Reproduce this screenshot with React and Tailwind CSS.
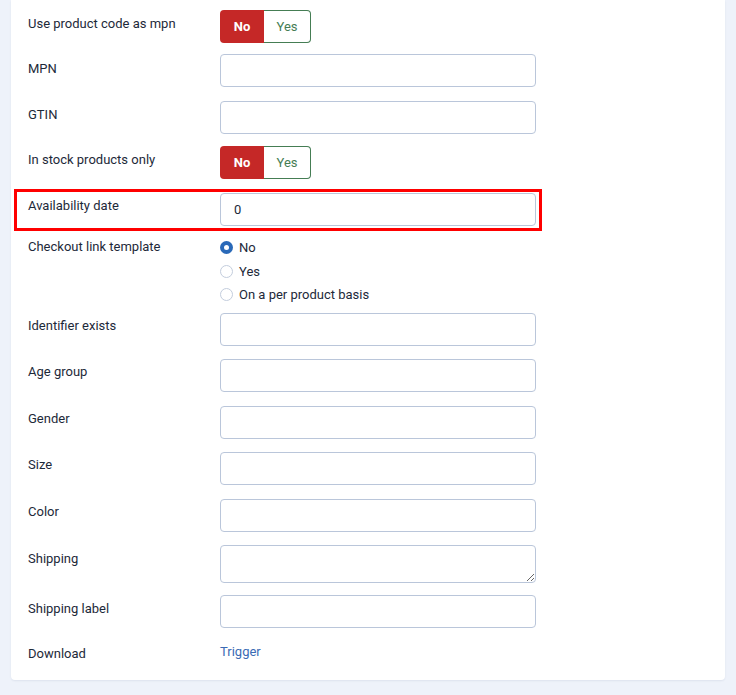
import React, { useState } from "react";

const font = { fontFamily: "Roboto, 'Liberation Sans', sans-serif" };

const Label = ({ children, className = "" }) => (
  <div className={`w-[192px] shrink-0 text-[13px] leading-[20px] text-[#1d2939] ${className}`}>
    {children}
  </div>
);

const Toggle = ({ value, onChange }) => (
  <div className="flex h-[33px] w-[91px] text-[13px]">
    <button
      onClick={() => onChange(false)}
      className={`w-[44px] rounded-l-[4px] font-bold ${
        !value ? "bg-[#c52827] text-white" : "border border-r-0 border-[#457d54] bg-white text-[#457d54]"
      }`}
    >
      No
    </button>
    <button
      onClick={() => onChange(true)}
      className={`flex-1 rounded-r-[4px] ${
        value ? "bg-[#457d54] font-bold text-white" : "border border-l-0 border-[#457d54] bg-white text-[#457d54]"
      }`}
    >
      Yes
    </button>
  </div>
);

const TextInput = ({ value, className = "" }) => (
  <input
    type="text"
    defaultValue={value}
    className={`h-[33px] w-[316px] rounded-[4px] border border-[#bac6da] bg-white px-[13px] text-[13px] text-[#1d2939] outline-none ${className}`}
  />
);

const Radio = ({ checked, label, onClick }) => (
  <label onClick={onClick} className="flex h-[23.5px] cursor-pointer items-center gap-[6px] text-[13px] text-[#1d2939]">
    {checked ? (
      <span className="flex h-[13px] w-[13px] items-center justify-center rounded-full bg-[#2a69b8]">
        <span className="h-[5px] w-[5px] rounded-full bg-white" />
      </span>
    ) : (
      <span className="h-[13px] w-[13px] rounded-full border border-[#c3cddd] bg-white" />
    )}
    {label}
  </label>
);

export default function App() {
  const [mpn, setMpn] = useState(false);
  const [stock, setStock] = useState(false);
  const [checkout, setCheckout] = useState("no");

  const fields = ["Identifier exists", "Age group", "Gender", "Size", "Color"];

  return (
    <div className="h-[695px] w-full bg-[#eef2fa]" style={font}>
      <div className="ml-[11px] h-[680px] w-[714px] rounded-b-[4px] bg-white pl-[17px] pt-[10px] shadow-[0_1px_2px_rgba(30,50,90,0.08)]">
        <div className="mb-[11px] flex">
          <Label className="pt-[4px]">Use product code as mpn</Label>
          <Toggle value={mpn} onChange={setMpn} />
        </div>
        <div className="mb-[14px] flex">
          <Label className="pt-[5px]">MPN</Label>
          <TextInput />
        </div>
        <div className="mb-[12px] flex">
          <Label className="pt-[4px]">GTIN</Label>
          <TextInput />
        </div>
        <div className="mb-[14px] flex">
          <Label className="pt-[4px]">In stock products only</Label>
          <Toggle value={stock} onChange={setStock} />
        </div>
        <div className="relative mb-[9px] flex w-[508px]">
          <div className="pointer-events-none absolute -bottom-[5px] -left-[14px] -right-[6px] -top-[4px] border-[3px] border-[#ff0000]" />
          <Label className="pt-[3px]">Availability date</Label>
          <TextInput value="0" />
        </div>
        <div className="mb-[6px] flex pt-[1px]">
          <Label className="pt-[1px]">Checkout link template</Label>
          <div className="flex flex-col">
            <Radio checked={checkout === "no"} label="No" onClick={() => setCheckout("no")} />
            <Radio checked={checkout === "yes"} label="Yes" onClick={() => setCheckout("yes")} />
            <Radio checked={checkout === "per"} label="On a per product basis" onClick={() => setCheckout("per")} />
          </div>
        </div>
        {fields.map((f) => (
          <div key={f} className="mb-[13.5px] flex">
            <Label className="pt-[3px]">{f}</Label>
            <TextInput />
          </div>
        ))}
        <div className="mb-[12px] flex">
          <Label className="pt-[4px]">Shipping</Label>
          <textarea className="block h-[38px] w-[316px] rounded-[4px] border border-[#bac6da] bg-white px-[13px] text-[13px] outline-none" />
        </div>
        <div className="mb-[13px] flex">
          <Label className="pt-[4px]">Shipping label</Label>
          <TextInput />
        </div>
        <div className="flex">
          <Label className="pt-[3px]">Download</Label>
          <a href="#" className="pt-[1px] text-[13px] leading-[20px] text-[#3a6bb5]">
            Trigger
          </a>
        </div>
      </div>
    </div>
  );
}
